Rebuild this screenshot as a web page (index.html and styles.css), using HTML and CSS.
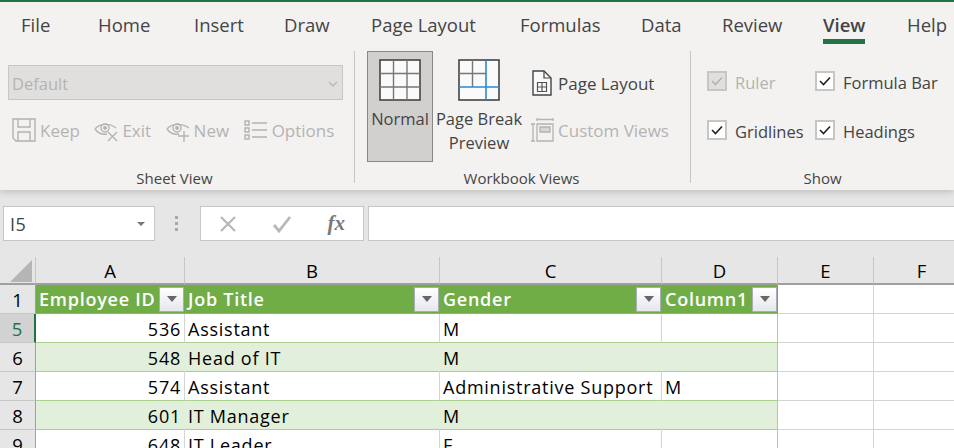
FILE: index.html
```html
<!DOCTYPE html>
<html lang="en">
<head>
	<meta charset="UTF-8">
	<title>Excel View ribbon</title>
	<link rel="stylesheet" href="styles.css">
</head>
<body>
	<div class="ribbon">
		<nav class="tabs">
			<span class="tab">File</span>
			<span class="tab">Home</span>
			<span class="tab">Insert</span>
			<span class="tab">Draw</span>
			<span class="tab">Page Layout</span>
			<span class="tab">Formulas</span>
			<span class="tab">Data</span>
			<span class="tab">Review</span>
			<span class="tab tab-active">View</span>
			<span class="tab">Help</span>
		</nav>
		<div class="groups">
			<section class="group group-sheet">
				<div class="group-body">
					<div class="view-select">
						<span>Default</span>
						<svg width="10" height="6" viewBox="0 0 10 6"><path d="M1 1l4 4 4-4" fill="none" stroke="#b5b3b1" stroke-width="1.2"/></svg>
					</div>
					<div class="sheet-buttons">
						<span class="small-btn small-keep">
							<svg width="24" height="24" viewBox="0 0 24 24" fill="none" stroke="#b5b3b1" stroke-width="1.4"><path d="M1 1h22v22H4l-3-3zM6 1v8h12V1M6 23v-9h12v9"/></svg>
							<span>Keep</span>
						</span>
						<span class="small-btn small-exit">
							<svg width="24" height="24" viewBox="0 0 24 24" fill="none" stroke="#b5b3b1" stroke-width="1.4"><path d="M1 11c5-6 15-6 21-1M1 11c3 4 7 6 12 5"/><circle cx="11" cy="10" r="4"/><circle cx="11" cy="10" r="1.200" fill="#b5b3b1"/><path d="M14 14l9 9M23 14l-9 9"/></svg>
							<span>Exit</span>
						</span>
						<span class="small-btn small-new">
							<svg width="24" height="24" viewBox="0 0 24 24" fill="none" stroke="#b5b3b1" stroke-width="1.4"><path d="M1 11c5-6 15-6 22-1M1 11c3 4 7 6 12 5"/><circle cx="11" cy="10" r="4"/><circle cx="11" cy="10" r="1.200" fill="#b5b3b1"/><path d="M18 13v11M12 18h11"/></svg>
							<span>New</span>
						</span>
						<span class="small-btn small-options">
							<svg width="24" height="20" viewBox="0 0 24 20" fill="none" stroke="#b5b3b1" stroke-width="1.4"><path d="M1 1h4v4H1zM1 8h4v4H1zM1 15h4v4H1zM8 3h15M8 10h15M8 17h15"/></svg>
							<span>Options</span>
						</span>
					</div>
				</div>
				<div class="group-label">Sheet View</div>
			</section>
			<section class="group group-workbook">
				<div class="group-body workbook-body">
					<div class="big-btn big-normal">
						<svg width="42" height="42" viewBox="0 0 42 42">
							<rect x="1" y="1" width="40" height="40" fill="#fafafa" stroke="#444" stroke-width="1.6"/>
							<path d="M14.500 1v40M28 1v40M1 14.500h40M1 28h40" stroke="#777" stroke-width="1.4"/>
						</svg>
						<span class="big-label">Normal</span>
					</div>
					<div class="big-btn big-break">
						<svg width="42" height="42" viewBox="0 0 42 42">
							<rect x="1" y="1" width="40" height="40" fill="#fafafa" stroke="#444" stroke-width="1.6"/>
							<path d="M14.500 1v27M1 14.500h27" stroke="#777" stroke-width="1.4"/>
							<path d="M28 1v40M1 28h40" stroke="#2b88d8" stroke-width="1.6"/>
						</svg>
						<span class="big-label">Page Break<br>Preview</span>
					</div>
					<div class="side-buttons">
						<span class="small-btn side-btn">
							<svg width="24" height="26" viewBox="0 0 24 26" fill="none"><path d="M3 1h11l7 7v17H3z" fill="#fafafa" stroke="#444" stroke-width="1.4"/><path d="M14 1v7h7" stroke="#444" stroke-width="1.2"/><path d="M7.500 12.500h9v9h-9zM12 12.500v9M7.500 17h9" stroke="#555" stroke-width="1.2"/></svg>
							<span>Page Layout</span>
						</span>
						<span class="small-btn side-btn side-disabled">
							<svg width="24" height="26" viewBox="0 0 24 26" fill="none" stroke="#b5b3b1" stroke-width="1.3"><path d="M7 1v3M23 1v3M7 2.500h16M1 7h4M1 24h4M3 7v17"/><path d="M7 7h16v17H7z"/><path d="M10 10h10v5H10z" fill="#d8d6d4"/></svg>
							<span>Custom Views</span>
						</span>
					</div>
				</div>
				<div class="group-label">Workbook Views</div>
			</section>
			<section class="group group-show">
				<div class="group-body show-grid">
					<label class="check check-disabled"><span class="box"><svg width="12" height="10" viewBox="0 0 12 10"><path d="M1 5l3.500 3.500L11 1.500" fill="none" stroke="#b5b3b1" stroke-width="1.6"/></svg></span>Ruler</label>
					<label class="check"><span class="box"><svg width="12" height="10" viewBox="0 0 12 10"><path d="M1 5l3.500 3.500L11 1.500" fill="none" stroke="#222" stroke-width="1.6"/></svg></span>Formula Bar</label>
					<label class="check"><span class="box"><svg width="12" height="10" viewBox="0 0 12 10"><path d="M1 5l3.500 3.500L11 1.500" fill="none" stroke="#222" stroke-width="1.6"/></svg></span>Gridlines</label>
					<label class="check"><span class="box"><svg width="12" height="10" viewBox="0 0 12 10"><path d="M1 5l3.500 3.500L11 1.500" fill="none" stroke="#222" stroke-width="1.6"/></svg></span>Headings</label>
				</div>
				<div class="group-label">Show</div>
			</section>
		</div>
	</div>

	<div class="formula-bar">
		<div class="name-box">
			<span>I5</span>
			<i class="caret"></i>
		</div>
		<div class="grip"><i></i><i></i><i></i></div>
		<div class="formula-btns">
			<svg width="18" height="18" viewBox="0 0 18 18"><path d="M2 2l14 14M16 2L2 16" stroke="#b8b8b8" stroke-width="2.200"/></svg>
			<svg width="20" height="18" viewBox="0 0 20 18"><path d="M2 10l5 6L18 2" fill="none" stroke="#b8b8b8" stroke-width="2.800"/></svg>
			<span class="fx">fx</span>
		</div>
		<div class="formula-input"></div>
	</div>

	<table class="sheet">
		<colgroup>
			<col class="col-head">
			<col class="col-a">
			<col class="col-b">
			<col class="col-c">
			<col class="col-d">
			<col class="col-e">
			<col class="col-f">
		</colgroup>
		<thead>
			<tr class="letters">
				<th class="corner"><svg width="22" height="22" viewBox="0 0 22 22"><path d="M22 0v22H0z" fill="#b5b5b5"/></svg></th>
				<th>A</th><th>B</th><th>C</th><th>D</th><th>E</th><th>F</th>
			</tr>
		</thead>
		<tbody>
			<tr class="title-row">
				<th class="row-no">1</th>
				<td class="hd"><div class="hd-in"><span>Employee ID</span><i class="filter"></i></div></td>
				<td class="hd"><div class="hd-in"><span>Job Title</span><i class="filter"></i></div></td>
				<td class="hd"><div class="hd-in"><span>Gender</span><i class="filter"></i></div></td>
				<td class="hd"><div class="hd-in"><span>Column1</span><i class="filter"></i></div></td>
				<td></td><td></td>
			</tr>
			<tr>
				<th class="row-no row-current">5</th>
				<td class="num tc">536</td><td class="tc">Assistant</td><td class="tc">M</td><td class="tc tc-end"></td>
				<td></td><td></td>
			</tr>
			<tr class="band">
				<th class="row-no">6</th>
				<td class="num tc">548</td><td class="tc">Head of IT</td><td class="tc">M</td><td class="tc tc-end"></td>
				<td></td><td></td>
			</tr>
			<tr>
				<th class="row-no">7</th>
				<td class="num tc">574</td><td class="tc">Assistant</td><td class="tc">Administrative Support</td><td class="tc tc-end">M</td>
				<td></td><td></td>
			</tr>
			<tr class="band">
				<th class="row-no">8</th>
				<td class="num tc">601</td><td class="tc">IT Manager</td><td class="tc">M</td><td class="tc tc-end"></td>
				<td></td><td></td>
			</tr>
			<tr>
				<th class="row-no">9</th>
				<td class="num tc">648</td><td class="tc">IT Leader</td><td class="tc">F</td><td class="tc tc-end"></td>
				<td></td><td></td>
			</tr>
		</tbody>
	</table>
</body>
</html>
```

FILE: styles.css
```css
html, body {
	margin: 0;
	height: 448px;
	overflow: hidden;
}
body {
	width: 954px;
	font-family: "Open Sans", "Noto Sans", sans-serif;
	background-color: #e6e6e6;
	color: #444;
}

/* ribbon */
.ribbon {
	height: 188px;
	border-top: 2px solid #217346;
	background-color: #f3f2f1;
	box-shadow: 0 2px 7px rgba(0, 0, 0, 0.18);
	position: relative;
}
.tabs {
	display: grid;
	grid-template-columns: 77px 96px 90px 87px 149px 121px 81px 101px 84px auto;
	height: 47px;
	padding-left: 21px;
	align-items: start;
	justify-items: start;
}
.tab {
	font-size: 18.500px;
	line-height: 24px;
	padding-top: 11px;
	white-space: nowrap;
}
.tab-active {
	font-weight: 600;
	padding-bottom: 2px;
	border-bottom: 5px solid #217346;
}
.groups {
	display: flex;
	height: 135px;
	padding-top: 2px;
}
.group {
	display: flex;
	flex-direction: column;
	border-right: 1px solid #c8c6c4;
	height: 132px;
}
.group-body {
	flex: none;
	box-sizing: border-box;
	height: 115px;
}
.group-label {
	height: 17px;
	text-align: center;
	font-size: 15px;
	line-height: 24px;
	color: #444;
}
.group-sheet {
	box-sizing: border-box;
	width: 355px;
}
.group-sheet .group-label {
	padding-right: 5px;
}
.group-workbook {
	box-sizing: border-box;
	width: 336px;
}
.group-workbook .group-label {
	padding-right: 2px;
}
.group-show {
	flex: 1;
	border-right: none;
}

/* sheet view */
.view-select {
	display: flex;
	justify-content: space-between;
	align-items: center;
	box-sizing: border-box;
	width: 335px;
	height: 35px;
	margin: 14px 0 0 8px;
	padding: 2px 4px 0 3px;
	background-color: #e1dfdd;
	border: 1px solid #c8c6c4;
	color: #b5b3b1;
	font-size: 16.500px;
}
.sheet-buttons {
	display: flex;
	margin: 16px 0 0 12px;
	gap: 14.500px;
}
.small-btn {
	display: flex;
	align-items: center;
	gap: 4px;
	height: 28px;
	font-size: 17px;
	color: #b5b3b1;
	white-space: nowrap;
}

/* workbook views */
.workbook-body {
	display: flex;
	padding-left: 12px;
}
.big-btn {
	display: flex;
	flex-direction: column;
	align-items: center;
	box-sizing: border-box;
	height: 111px;
	padding-top: 7px;
	font-size: 16.500px;
	line-height: 24px;
	text-align: center;
	border: 1px solid transparent;
}
.big-btn svg {
	display: block;
	margin-bottom: 6px;
}
.big-normal {
	width: 66px;
	background-color: #d2d0ce;
	border-color: #8a8886;
}
.big-break {
	width: 92px;
}
.side-buttons {
	display: flex;
	flex-direction: column;
	margin: 18px 0 0 5px;
	gap: 19px;
}
.side-btn {
	color: #444;
}
.side-disabled {
	color: #b5b3b1;
}

/* show */
.show-grid {
	display: grid;
	grid-template-columns: 108px auto;
	grid-auto-rows: 49px;
	padding: 19px 0 0 16px;
}
.check {
	display: flex;
	align-items: center;
	gap: 8px;
	height: 24px;
	font-size: 16.500px;
	white-space: nowrap;
}
.check-disabled {
	color: #b5b3b1;
}
.box {
	display: flex;
	align-items: center;
	justify-content: center;
	box-sizing: border-box;
	width: 20px;
	height: 20px;
	margin-top: -2px;
	background-color: #fff;
	border: 2px solid #c8c6c4;
}
.check-disabled .box {
	background-color: #e1dfdd;
}

/* formula bar */
.formula-bar {
	display: flex;
	align-items: center;
	height: 67px;
	padding-left: 3px;
}
.name-box, .formula-btns, .formula-input {
	display: flex;
	align-items: center;
	box-sizing: border-box;
	height: 35px;
	background-color: #fff;
	border: 1px solid #c8c6c4;
}
.name-box {
	justify-content: space-between;
	width: 152px;
	padding: 0 9px 0 6px;
	font-size: 18px;
	letter-spacing: 0.5px;
}
.caret {
	border: 4px solid transparent;
	border-top: 4px solid #777;
	border-bottom: none;
}
.grip {
	display: flex;
	flex-direction: column;
	gap: 3px;
	width: 45px;
	align-items: center;
	padding-right: 3px;
	box-sizing: border-box;
}
.grip i {
	width: 3px;
	height: 3px;
	background-color: #a8a8a8;
}
.formula-btns {
	width: 164px;
	justify-content: space-between;
	padding: 0 18px;
}
.fx {
	font-family: "Liberation Serif", serif;
	font-style: italic;
	font-weight: bold;
	font-size: 21px;
	color: #7a7a7a;
}
.formula-input {
	flex: 1;
	margin-left: 4px;
	border-right: none;
}

/* sheet */
.sheet {
	table-layout: fixed;
	border-collapse: separate;
	border-spacing: 0;
	width: 970px;
	background-color: #fff;
	color: #000;
	font-size: 18px;
	letter-spacing: 0.75px;
}
.col-head { width: 36px; }
.col-a { width: 149px; }
.col-b { width: 255px; }
.col-c { width: 222px; }
.col-d { width: 116px; }
.col-e { width: 96px; }
.col-f { width: 96px; }
.sheet th, .sheet td {
	box-sizing: border-box;
	height: 29px;
	padding: 1px 3px 0;
	overflow: hidden;
	white-space: nowrap;
	border-right: 1px solid #d4d4d4;
	border-bottom: 1px solid #d4d4d4;
	font-weight: normal;
	line-height: 24px;
}
.letters th {
	height: 28px;
	background-color: #e6e6e6;
	border-right: 1px solid #c6c6c6;
	border-bottom: 2px solid #9f9f9f;
	text-align: center;
	vertical-align: bottom;
	letter-spacing: 0;
	font-size: 18.500px;
}
.sheet .corner {
	padding: 0 3px 1px 0;
	text-align: right;
	border-bottom-color: #9f9f9f;
	vertical-align: bottom;
}
.corner svg {
	display: block;
	margin-left: auto;
}
.sheet .row-no {
	padding: 1px 0 0;
	background-color: #e6e6e6;
	text-align: center;
	letter-spacing: 0;
	font-size: 18.500px;
	border-right: 1px solid #9f9f9f;
	border-bottom: 1px solid #c6c6c6;
}
.sheet .row-current {
	background-color: #d2d2d2;
	color: #217346;
	border-right: 2px solid #217346;
}
.sheet .hd {
	padding: 0 1px 0 3px;
	background-color: #70ad47;
	color: #fff;
	font-weight: 600;
	border-right: none;
	border-bottom: 1px solid #9f9f9f;
}
.hd-in {
	display: flex;
	justify-content: space-between;
	align-items: center;
}
.filter {
	display: flex;
	align-items: center;
	justify-content: center;
	box-sizing: border-box;
	width: 25px;
	height: 25px;
	flex: none;
	background: linear-gradient(#fff, #e6e6ee);
	border: 1px solid #a9adb8;
}
.filter::after {
	content: "";
	border: 5px solid transparent;
	border-top: 6px solid #666;
	border-bottom: none;
}
.num {
	text-align: right;
}
.sheet .tc {
	border-bottom-color: #a9d08e;
}
.sheet .tc-end {
	border-right-color: #a9d08e;
}
.sheet .band .tc {
	background-color: #e2efda;
	border-right-color: #e2efda;
}
.sheet .band .tc-end {
	border-right-color: #a9d08e;
}
```
